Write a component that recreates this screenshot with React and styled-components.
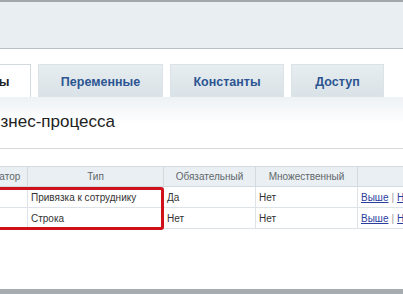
import React from "react";
import styled, { createGlobalStyle } from "styled-components";

const GlobalStyle = createGlobalStyle`
  html, body {
    margin: 0;
    padding: 0;
    overflow: hidden;
    background: #ffffff;
  }
  body {
    font-family: "Liberation Sans", Arial, sans-serif;
  }
`;

const Screen = styled.div`
  display: flex;
  flex-direction: column;
  height: 294px;
  width: 403px;
  overflow: hidden;
  border-top: 2px solid #a2a7ab;
  box-sizing: border-box;
`;

/* страница шире окна — левая часть обрезана, как на скриншоте */
const Page = styled.div`
  width: 700px;
  margin-left: -200px;
  display: flex;
  flex-direction: column;
`;

const TopBand = styled.div`
  height: 46px;
  background: #e8eef1;
  border-bottom: 1px solid #b9c1c6;
`;

const TabBar = styled.div`
  display: flex;
  gap: 7px;
  padding: 15px 0 0 20px;
  align-items: flex-end;
`;

const Tab = styled.div`
  width: ${(p) => p.$w}px;
  height: 33px;
  box-sizing: border-box;
  display: flex;
  align-items: center;
  justify-content: center;
  padding-top: 1px;
  font-size: 12.5px;
  font-weight: bold;
  color: ${(p) => (p.$active ? "#222222" : "#2c5592")};
  background: ${(p) =>
    p.$active ? "#ffffff" : "linear-gradient(#e7edf0, #d9e2e7)"};
  border: 1px solid ${(p) => (p.$active ? "#d3dade" : "#dbe3e7")};
  border-bottom: none;
`;

const Panel = styled.div`
  background: linear-gradient(#edf2f5, #ffffff 26px);
  padding: 14px 0 0 0;
`;

const Title = styled.h1`
  margin: 0;
  padding-left: 86px;
  font-size: 17px;
  line-height: 22px;
  font-weight: normal;
  color: #222222;
`;

const Rule = styled.div`
  height: 1px;
  background: #d6dadd;
  margin: 15px 0 17px 0;
`;

const TableWrap = styled.div`
  position: relative;
  margin-left: 29px;
`;

const Table = styled.table`
  border-collapse: collapse;
  table-layout: fixed;
  font-size: 10px;
`;

const Th = styled.th`
  width: ${(p) => p.$w}px;
  height: 20px;
  padding: 0 3px;
  box-sizing: border-box;
  background: #e9eff2;
  border: 1px solid #d3dbe0;
  color: #62676b;
  font-weight: normal;
  text-align: center;
  white-space: nowrap;
  overflow: hidden;
`;

const Td = styled.td`
  height: 21px;
  padding: 0 3px;
  box-sizing: border-box;
  border: 1px solid #dde3e6;
  color: #333333;
  white-space: nowrap;
  overflow: hidden;
`;

const Link = styled.a`
  color: #2b3e9e;
  text-decoration: underline;
`;

const Sep = styled.span`
  color: #9a9a9a;
  margin: 0 3px;
`;

const Highlight = styled.div`
  position: absolute;
  left: 0;
  top: 21px;
  width: 335px;
  height: 43px;
  box-sizing: border-box;
  border: 3px solid #cf111a;
  border-radius: 3px;
`;

const Footer = styled.div`
  margin-top: auto;
  height: 5px;
  background: #a7acb0;
`;

const rows = [
  { name: "Сотрудник", code: "Employee", type: "Привязка к сотруднику", req: "Да", mult: "Нет" },
  { name: "Комментарий", code: "Comment", type: "Строка", req: "Нет", mult: "Нет" },
];

function App() {
  return (
    <Screen>
      <GlobalStyle />
      <Page>
        <TopBand />
        <TabBar>
          <Tab $w={90}>Шаблон</Tab>
          <Tab $w={114} $active>Параметры</Tab>
          <Tab $w={125}>Переменные</Tab>
          <Tab $w={114}>Константы</Tab>
          <Tab $w={93}>Доступ</Tab>
        </TabBar>
        <Panel>
          <Title>Параметры бизнес-процесса</Title>
          <Rule />
          <TableWrap>
            <Table>
              <thead>
                <tr>
                  <Th $w={110}>Название</Th>
                  <Th $w={88}>Идентификатор</Th>
                  <Th $w={136}>Тип</Th>
                  <Th $w={92}>Обязательный</Th>
                  <Th $w={102}>Множественный</Th>
                  <Th $w={110}></Th>
                </tr>
              </thead>
              <tbody>
                {rows.map((r) => (
                  <tr key={r.code}>
                    <Td>{r.name}</Td>
                    <Td>{r.code}</Td>
                    <Td>{r.type}</Td>
                    <Td>{r.req}</Td>
                    <Td>{r.mult}</Td>
                    <Td>
                      <Link>Выше</Link>
                      <Sep>|</Sep>
                      <Link>Ниже</Link>
                    </Td>
                  </tr>
                ))}
              </tbody>
            </Table>
            <Highlight />
          </TableWrap>
        </Panel>
      </Page>
      <Footer />
    </Screen>
  );
}

export default App;
